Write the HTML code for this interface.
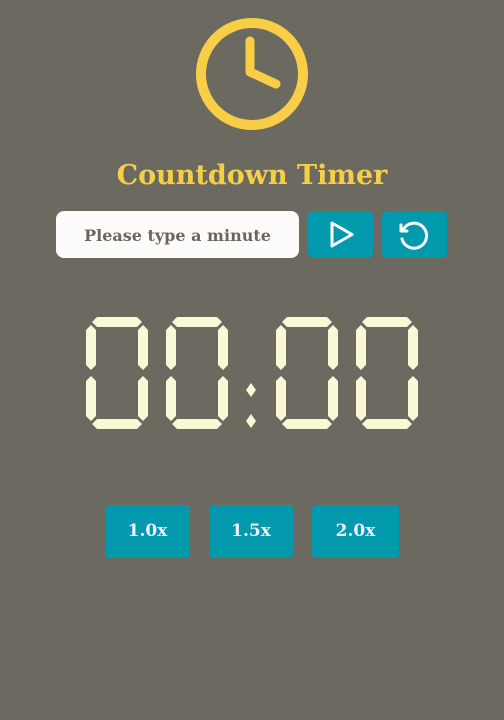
<!DOCTYPE html>
<html><head><style>
body{margin:0;width:504px;height:720px;background:#6c6a60;position:relative;overflow:hidden;font-family:"DejaVu Serif","Liberation Serif",serif}
.a{position:absolute}
.title{left:0;width:504px;top:160px;text-align:center;color:#f9ce47;font-weight:bold;font-size:27px}
.inp{left:56px;top:211px;width:243px;height:47px;background:#fdfcfb;border-radius:8px;text-align:center;line-height:49px;color:#6a685e;font-weight:bold;font-size:16px}
.btn{background:#0399ad;border-radius:5px}
.sp{top:505px;height:53px;color:#eef;font-weight:bold;font-size:17px;text-align:center;line-height:53px;background:#0399ad;border-radius:4px}
</style></head><body>
<svg class="a" style="left:0;top:0" width="504" height="140">
<circle cx="252" cy="74" r="51" fill="none" stroke="#f9ce47" stroke-width="10"/>
<path d="M250 41 V72 L276 84" fill="none" stroke="#f9ce47" stroke-width="9" stroke-linecap="round" stroke-linejoin="round"/>
</svg>
<div class="a title">Countdown Timer</div>
<div class="a inp">Please type a minute</div>
<div class="a btn" style="left:308px;top:211px;width:65px;height:47px">
<svg width="65" height="47"><path d="M24 12 L44 23.5 L24 35 Z" fill="none" stroke="#fff" stroke-width="3" stroke-linejoin="round"/></svg></div>
<div class="a btn" style="left:382px;top:211px;width:65px;height:47px">
<svg width="65" height="47"><path d="M21.5 18 A12.5 12.5 0 1 1 20 28" fill="none" stroke="#fff" stroke-width="3" stroke-linecap="round"/><path d="M19 14 V20 H25" fill="none" stroke="#fff" stroke-width="3" stroke-linecap="round" stroke-linejoin="round"/></svg></div>
<svg class="a" style="left:0;top:0" width="504" height="450">
<defs><g id="d" fill="#fbf8d8">
<polygon points="11,0 51,0 56,5 51,10 11,10 6,5"/>
<polygon points="5,8 10,13 10,48 5,53 0,48 0,13"/>
<polygon points="57,8 62,13 62,48 57,53 52,48 52,13"/>
<polygon points="5,59 10,64 10,99 5,104 0,99 0,64"/>
<polygon points="57,59 62,64 62,99 57,104 52,99 52,64"/>
<polygon points="11,102 51,102 56,107 51,112 11,112 6,107"/>
</g></defs>
<use href="#d" x="86" y="317"/>
<use href="#d" x="166" y="317"/>
<use href="#d" x="276" y="317"/>
<use href="#d" x="356" y="317"/>
<polygon points="251,383 256,390 251,397 246,390" fill="#fbf8d8"/>
<polygon points="251,414 256,421 251,428 246,421" fill="#fbf8d8"/>
</svg>
<div class="a sp" style="left:105px;width:85px">1.0x</div>
<div class="a sp" style="left:209px;width:84px">1.5x</div>
<div class="a sp" style="left:312px;width:87px">2.0x</div>
</body></html>
